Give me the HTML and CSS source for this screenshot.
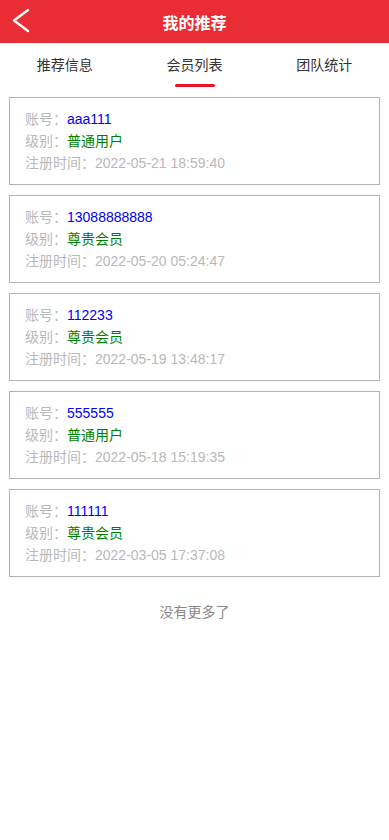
FILE: index.html
```html
<!DOCTYPE html>
<html lang="zh-CN">
<head>
  <meta charset="UTF-8">
  <meta name="viewport" content="width=device-width, initial-scale=1.0">
  <title>我的推荐</title>
  <link rel="stylesheet" href="styles.css">
</head>
<body>
  <div class="header">
    <a class="back" href="#">
      <svg width="20" height="26" viewBox="0 0 20 26">
        <polyline points="18,2 4,12.5 18,23" fill="none" stroke="#fff" stroke-width="2.4" stroke-linecap="round" stroke-linejoin="round"/>
      </svg>
    </a>
    <div class="title">我的推荐</div>
  </div>

  <div class="tabs">
    <div class="tab">推荐信息</div>
    <div class="tab active">会员列表</div>
    <div class="tab">团队统计</div>
  </div>

  <div class="list">
    <div class="card">
      <div class="row">账号：<span class="account">aaa111</span></div>
      <div class="row">级别：<span class="level">普通用户</span></div>
      <div class="row">注册时间：2022-05-21 18:59:40</div>
    </div>
    <div class="card">
      <div class="row">账号：<span class="account">13088888888</span></div>
      <div class="row">级别：<span class="level">尊贵会员</span></div>
      <div class="row">注册时间：2022-05-20 05:24:47</div>
    </div>
    <div class="card">
      <div class="row">账号：<span class="account">112233</span></div>
      <div class="row">级别：<span class="level">尊贵会员</span></div>
      <div class="row">注册时间：2022-05-19 13:48:17</div>
    </div>
    <div class="card">
      <div class="row">账号：<span class="account">555555</span></div>
      <div class="row">级别：<span class="level">普通用户</span></div>
      <div class="row">注册时间：2022-05-18 15:19:35</div>
    </div>
    <div class="card">
      <div class="row">账号：<span class="account">111111</span></div>
      <div class="row">级别：<span class="level">尊贵会员</span></div>
      <div class="row">注册时间：2022-03-05 17:37:08</div>
    </div>
  </div>

  <div class="no-more">没有更多了</div>
</body>
</html>
```

FILE: styles.css
```css
* {
  margin: 0;
  padding: 0;
  box-sizing: border-box;
}

body {
  font-family: 'Liberation Sans', 'Noto Sans CJK SC', sans-serif;
  background: #fff;
  color: #333;
}

.header {
  height: 43px;
  background-color: #e92d35;
  display: flex;
  align-items: center;
  justify-content: center;
  position: relative;
}

.back {
  position: absolute;
  left: 10px;
  top: 8px;
  display: block;
  width: 20px;
  height: 26px;
}

.title {
  color: #fff;
  font-size: 16px;
  font-weight: bold;
}

.tabs {
  display: flex;
  height: 44px;
}

.tab {
  flex: 1;
  display: flex;
  flex-direction: column;
  align-items: center;
  padding-top: 12px;
  font-size: 14px;
  line-height: 20px;
  color: #333;
}

.tab.active::after {
  content: "";
  display: block;
  width: 40px;
  height: 3px;
  margin-top: 9px;
  border-radius: 2px;
  background: #ec1230;
}

.list {
  padding: 10px 9px 0;
}

.card {
  border: 1px solid #b3b3b3;
  padding: 10px 15px;
  margin-bottom: 10px;
}

.row {
  font-size: 14px;
  line-height: 22px;
  color: #b8b8b8;
}

.account {
  color: #0000ff;
}

.level {
  color: #008000;
}

.no-more {
  text-align: center;
  font-size: 14px;
  line-height: 20px;
  color: #888;
  padding-top: 15px;
}
```
